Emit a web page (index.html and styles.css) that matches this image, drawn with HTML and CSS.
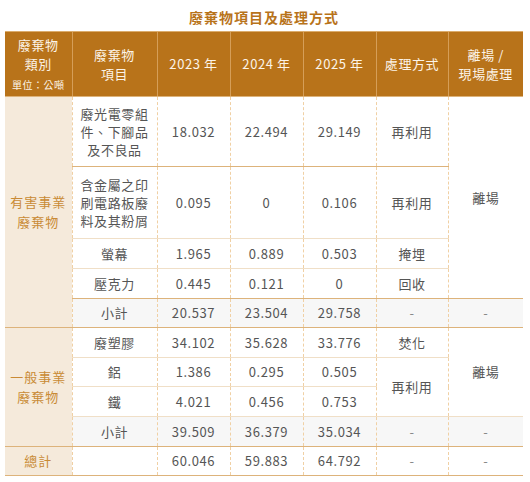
FILE: index.html
```html
<!DOCTYPE html>
<html lang="zh-Hant">
<head>
<meta charset="utf-8">
<title>廢棄物項目及處理方式</title>
<link rel="stylesheet" href="styles.css">
</head>
<body>
<div class="wrap">
  <h2 class="title">廢棄物項目及處理方式</h2>
  <table class="waste">
    <colgroup>
      <col class="c1"><col class="c2"><col class="c3"><col class="c4"><col class="c5"><col class="c6"><col class="c7">
    </colgroup>
    <thead>
      <tr>
        <th>廢棄物<br>類別<br><span class="unit">單位：公噸</span></th>
        <th>廢棄物<br>項目</th>
        <th>2023 年</th>
        <th>2024 年</th>
        <th>2025 年</th>
        <th>處理方式</th>
        <th>離場 /<br>現場處理</th>
      </tr>
    </thead>
    <tbody>
      <tr class="h70 major">
        <td rowspan="5" class="cat">有害事業<br>廢棄物</td>
        <td>廢光電零組件、下腳品及不良品</td>
        <td>18.032</td><td>22.494</td><td>29.149</td><td>再利用</td>
        <td rowspan="4" class="major-b">離場</td>
      </tr>
      <tr class="h72">
        <td>含金屬之印刷電路板廢料及其粉屑</td>
        <td>0.095</td><td>0</td><td>0.106</td><td>再利用</td>
      </tr>
      <tr class="h30">
        <td>螢幕</td><td>1.965</td><td>0.889</td><td>0.503</td><td>掩埋</td>
      </tr>
      <tr class="h30 major">
        <td>壓克力</td><td>0.445</td><td>0.121</td><td>0</td><td>回收</td>
      </tr>
      <tr class="h29 sub major">
        <td>小計</td><td>20.537</td><td>23.504</td><td>29.758</td><td class="dash">-</td><td class="dash">-</td>
      </tr>
      <tr class="h30">
        <td rowspan="4" class="cat major-b">一般事業<br>廢棄物</td>
        <td>廢塑膠</td><td>34.102</td><td>35.628</td><td>33.776</td><td>焚化</td>
        <td rowspan="3">離場</td>
      </tr>
      <tr class="h29">
        <td>鋁</td><td>1.386</td><td>0.295</td><td>0.505</td>
        <td rowspan="2">再利用</td>
      </tr>
      <tr class="h30">
        <td>鐵</td><td>4.021</td><td>0.456</td><td>0.753</td>
      </tr>
      <tr class="h30 sub major">
        <td>小計</td><td>39.509</td><td>36.379</td><td>35.034</td><td class="dash">-</td><td class="dash">-</td>
      </tr>
      <tr class="h29 major">
        <td class="cat">總計</td><td></td><td>60.046</td><td>59.883</td><td>64.792</td><td class="dash">-</td><td class="dash">-</td>
      </tr>
    </tbody>
  </table>
</div>
</body>
</html>
```
FILE: styles.css
```css
html, body {
  margin: 0;
  padding: 0;
  background: #ffffff;
}
body {
  font-family: "Noto Sans CJK TC", "Noto Sans", sans-serif;
  color: #555555;
}
.wrap {
  padding: 7px 7px 0 5px;
}
.title {
  margin: 0 0 4px 0;
  height: 20px;
  line-height: 20px;
  font-size: 14px;
  font-weight: 700;
  color: #b8731a;
  text-align: center;
  letter-spacing: 1px;
}
.waste {
  width: 518px;
  border-collapse: collapse;
  table-layout: fixed;
  font-size: 13px;
  letter-spacing: 0.6px;
  border-bottom: 1px solid #ddb37b;
}
.c1 { width: 67px; }
.c2 { width: 85px; }
.c3 { width: 73px; }
.c4 { width: 73px; }
.c5 { width: 73px; }
.c6 { width: 72px; }
.c7 { width: 75px; }

.waste th {
  background: #b8731a;
  color: #fcf4e8;
  font-weight: 400;
  line-height: 19.5px;
  height: 64px;
  padding: 0 4px;
  text-align: center;
  vertical-align: middle;
  border-top: 1px solid #dbac6c;
  border-left: 1px solid #d59e58;
  border-bottom: 1px solid #ddb37b;
}
.waste th:first-child { border-left: none; }
.unit {
  display: inline-block;
  font-size: 10px;
  line-height: 15px;
  letter-spacing: 0.5px;
}
.waste td {
  text-align: center;
  vertical-align: middle;
  line-height: 18px;
  padding: 0 6px;
  border-left: 1px dashed #f0d0a4;
  border-bottom: 1px solid #f0dfc7;
}
.waste td.cat {
  background: #f5eadb;
  color: #c98a35;
  line-height: 20px;
  letter-spacing: 1px;
  border-left: none;
  padding: 0 2px;
}
.waste tr.major > td,
.waste td.major-b {
  border-bottom-color: #ddb37b;
}
.waste tr.sub > td { background: #f7f7f7; }
.waste tr.sub > td.cat { background: #f5eadb; }
.waste td.dash { color: #888888; }

.h70 { height: 70px; }
.h72 { height: 72px; }
.h30 { height: 30px; }
.h29 { height: 29px; }
```
